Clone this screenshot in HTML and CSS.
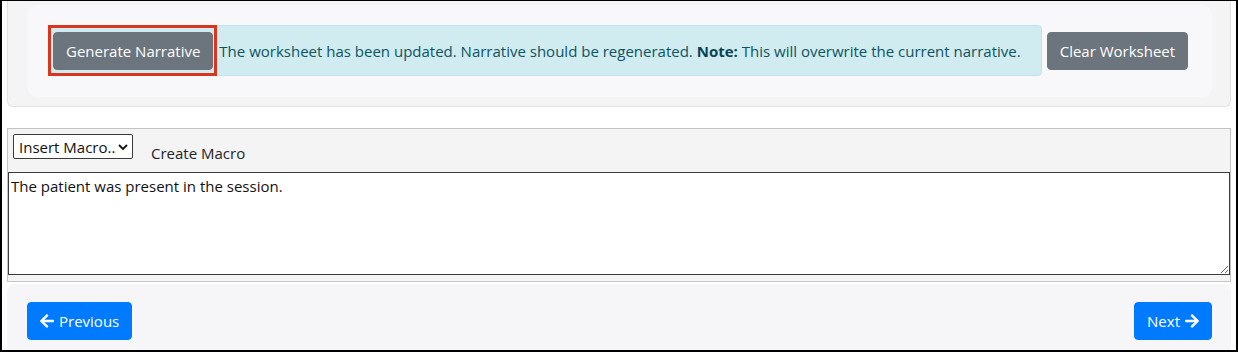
FILE: index.html
```html
<!DOCTYPE html>
<html lang="en">
<head>
    <meta charset="UTF-8">
    <meta name="viewport" content="width=device-width, initial-scale=1.0">
    <title>Session Narrative</title>

    <link rel="stylesheet" href="styles.css">

</head>

<body>

    <div class="frame">

        <div class="worksheet-card">
            <div class="worksheet-inner">
                <div class="alert-row">
                    <div class="alert-info">
                        <span class="highlight">
                            <button class="btn btn-secondary">Generate Narrative</button>
                        </span>
                        <span class="alert-text">The worksheet has been updated. Narrative should be regenerated. <strong>Note:</strong> This will overwrite the current narrative.</span>
                    </div>
                    <button class="btn btn-secondary">Clear Worksheet</button>
                </div>
            </div>
        </div>

        <div class="narrative-card">
            <div class="macro-bar">
                <select class="macro-select">
                    <option>Insert Macro..</option>
                </select>
                <svg class="chevron" viewBox="0 0 10 6" width="10" height="6">
                    <path d="M1 1 L5 5 L9 1" fill="none" stroke="#111" stroke-width="1.8"/>
                </svg>
                <span class="create-macro">Create Macro</span>
            </div>
            <textarea class="narrative">The patient was present in the session.</textarea>
        </div>

        <div class="nav-bar">
            <button class="btn btn-primary">
                <svg class="arrow" viewBox="0 0 448 512" width="14" height="16">
                    <path fill="#fff" d="M257.5 445.1l-22.2 22.2c-9.4 9.4-24.6 9.4-33.9 0L7 273c-9.4-9.4-9.4-24.6 0-33.9L201.4 44.7c9.4-9.4 24.6-9.4 33.9 0l22.2 22.2c9.5 9.5 9.3 25-.4 34.3L136.6 216H424c13.3 0 24 10.7 24 24v32c0 13.3-10.7 24-24 24H136.6l120.5 114.8c9.8 9.3 10 24.8.4 34.3z"/>
                </svg>
                Previous
            </button>
            <button class="btn btn-primary">
                Next
                <svg class="arrow" viewBox="0 0 448 512" width="14" height="16">
                    <path fill="#fff" d="M190.5 66.9l22.2-22.2c9.4-9.4 24.6-9.4 33.9 0L441 239c9.4 9.4 9.4 24.6 0 33.9L246.6 467.3c-9.4 9.4-24.6 9.4-33.9 0l-22.2-22.2c-9.5-9.5-9.3-25 .4-34.3L311.4 296H24c-13.3 0-24-10.7-24-24v-32c0-13.3 10.7-24 24-24h287.4L190.9 101.2c-9.8-9.3-10-24.8-.4-34.3z"/>
                </svg>
            </button>
        </div>

    </div>

</body>

</html>
```

FILE: styles.css
```css
*, html {
    box-sizing: border-box;
    margin: 0;
    padding: 0;
}

body {
    background: #fff;
    font-family: "Open Sans", "Noto Sans", sans-serif;
    font-size: 15px;
    color: #212529;
}

.frame {
    width: 1238px;
    height: 352px;
    border: 2px solid #000;
    border-top-width: 1px;
    padding: 0 5px;
    display: flex;
    flex-direction: column;
}

/* top worksheet panel */
.worksheet-card {
    background: #f4f4f5;
    border: 1px solid #e3e3e5;
    border-top: none;
    border-radius: 0 0 6px 6px;
    padding: 4px 18px 9px 19px;
}

.worksheet-inner {
    background: #f8f8fa;
    border-radius: 10px;
    padding: 20px 21px 21px;
}

.alert-row {
    display: flex;
    align-items: center;
    gap: 5px;
}

.alert-info {
    display: flex;
    align-items: center;
    background: #d1ecf1;
    border: 1px solid #bee5eb;
    border-radius: 4px;
    color: #0c5460;
    padding-right: 20px;
}

.alert-info strong {
    color: #0a4551;
}

.highlight {
    display: block;
    border: 3px solid #d8361f;
    margin: -1px 0 -1px -1px;
    padding: 4px 1px 3px 2px;
}

.alert-text {
    margin-left: 2px;
    line-height: 24px;
}

.btn {
    display: inline-flex;
    align-items: center;
    font-family: inherit;
    font-size: 15px;
    line-height: 24px;
    padding: 6px 12px;
    border: 1px solid transparent;
    border-radius: 4px;
    color: #fff;
    cursor: pointer;
}

.btn-secondary {
    background: #6c757d;
    border-color: #6c757d;
}

.btn-primary {
    background: #007bff;
    border-color: #007bff;
    gap: 5px;
}

/* narrative editor */
.narrative-card {
    margin-top: 21px;
    background: #f4f4f4;
    border: 1px solid #c4c4c4;
    padding-bottom: 6px;
}

.macro-bar {
    display: flex;
    align-items: flex-start;
    height: 43px;
    padding: 5px 5px 0;
}

.macro-select {
    appearance: none;
    -webkit-appearance: none;
    width: 120px;
    height: 25px;
    border: 1px solid #3a3a3a;
    border-radius: 2px;
    background: #fff;
    font-family: inherit;
    font-size: 15px;
    color: #111;
    padding: 0 13px 0 5px;
}

.chevron {
    margin: 10px 0 0 -15px;
    pointer-events: none;
}

.create-macro {
    margin: 9px 0 0 23px;
    line-height: 20px;
}

.narrative {
    display: block;
    width: 100%;
    height: 103px;
    border: 1px solid #3c3c3c;
    background: #fff;
    font-family: inherit;
    font-size: 15px;
    line-height: 20px;
    color: #111;
    padding: 3px 2px;
}

/* bottom navigation */
.nav-bar {
    flex: 1;
    margin-top: 2px;
    background: #f6f6f8;
    border-radius: 8px 8px 0 0;
    padding: 18px 19px 0 20px;
    display: flex;
    justify-content: space-between;
    align-items: flex-start;
}
```
